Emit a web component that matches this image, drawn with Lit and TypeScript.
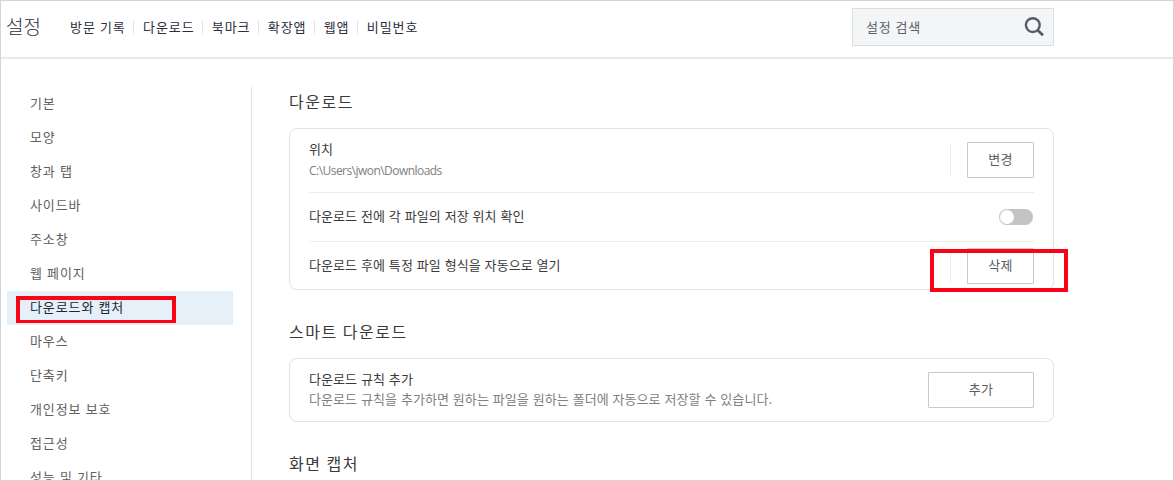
import { LitElement, html, css, nothing } from "lit";
import { customElement, property } from "lit/decorators.js";
import { classMap } from "lit/directives/class-map.js";

@customElement("settings-header")
export class SettingsHeader extends LitElement {
  static styles = css`
    :host {
      display: flex;
      align-items: flex-start;
      box-sizing: border-box;
      height: 57px;
      flex: none;
      padding: 7px 119px 0 5px;
      border-bottom: 1px solid #e3e4e5;
      box-shadow: 0 1px 1px #eeeeee;
      color: #2b2f3b;
    }

    .title {
      margin: 0;
      width: 57px;
      font-size: 19px;
      font-weight: 300;
      line-height: 36px;
    }

    .links {
      display: flex;
      align-items: center;
      height: 37px;
      font-size: 13px;
      letter-spacing: 0.92px;
      word-spacing: 0.4px;
    }

    .link {
      padding: 0 7.7px 0 8.6px;
      line-height: 14px;
      white-space: nowrap;
      border-left: 1px solid #e4e6e8;
    }

    .link:first-child {
      padding-left: 7px;
      border-left: none;
    }

    .search {
      display: flex;
      align-items: center;
      justify-content: space-between;
      box-sizing: border-box;
      width: 202px;
      height: 38px;
      margin-left: auto;
      padding: 0 8px 0 13px;
      border: 1px solid #dcdfe2;
      background: #f3f5f7;
      color: #5b5e69;
      font-size: 13px;
      letter-spacing: 0.85px;
    }

    .placeholder {
      padding-bottom: 2px;
    }
  `;

  links = ["방문 기록", "다운로드", "북마크", "확장앱", "웹앱", "비밀번호"];

  render() {
    return html`
      <h1 class="title">설정</h1>
      <nav class="links">
        ${this.links.map((link) => html`<span class="link">${link}</span>`)}
      </nav>
      <div class="search">
        <span class="placeholder">설정 검색</span>
        <svg width="22" height="22" viewBox="0 0 22 22" fill="none" stroke="#585c6b">
          <circle cx="9.8" cy="9.1" r="6.9" stroke-width="2.4" />
          <path d="M14.7 14.2L20 19.2" stroke-width="2.8" />
        </svg>
      </div>
    `;
  }
}

@customElement("settings-menu")
export class SettingsMenu extends LitElement {
  static styles = css`
    :host {
      display: block;
      box-sizing: border-box;
      width: 245px;
      flex: none;
      padding-right: 18px;
      border-right: 1px solid #e0e2e3;
    }

    .item {
      position: relative;
      height: 34px;
      padding-left: 23px;
      color: #606060;
      font-size: 13px;
      line-height: 31px;
      letter-spacing: 0.9px;
      word-spacing: 0.4px;
    }

    .item.active {
      background: #e5f0f9;
      color: #1e2733;
    }

    .mark {
      position: absolute;
      left: 9px;
      top: 5px;
      box-sizing: border-box;
      width: 160px;
      height: 27px;
      border: 4px solid #fb0316;
      border-bottom-width: 3px;
    }
  `;

  items = [
    "기본",
    "모양",
    "창과 탭",
    "사이드바",
    "주소창",
    "웹 페이지",
    "다운로드와 캡처",
    "마우스",
    "단축키",
    "개인정보 보호",
    "접근성",
    "성능 및 기타",
  ];

  @property() selected = "다운로드와 캡처";

  render() {
    return this.items.map((item) => {
      const active = item === this.selected;
      return html`
        <div class=${classMap({ item: true, active })}>
          ${item}${active ? html`<span class="mark"></span>` : nothing}
        </div>
      `;
    });
  }
}

@customElement("settings-content")
export class SettingsContent extends LitElement {
  static styles = css`
    :host {
      display: block;
      width: 765px;
      margin-left: 37px;
      color: #3a3a3a;
      font-size: 13px;
    }

    .heading {
      margin: 0;
      height: 41px;
      font-size: 16px;
      font-weight: inherit;
      line-height: 29px;
      letter-spacing: 1.5px;
    }

    .card {
      box-sizing: border-box;
      margin-bottom: 27px;
      padding: 0 19px;
      border: 1px solid #e1e3e4;
      border-radius: 8px;
    }

    .row {
      position: relative;
      display: flex;
      align-items: center;
      justify-content: space-between;
      box-sizing: border-box;
      height: 49px;
      border-top: 1px solid #ececec;
    }

    .row:last-child {
      height: 48px;
    }

    .row.tall {
      height: 63px;
      padding-bottom: 1px;
    }

    .row.tall:last-child {
      height: 62px;
      padding-bottom: 0;
    }

    .row:first-child {
      border-top: none;
    }

    .label {
      padding-bottom: 2px;
      line-height: 20px;
      letter-spacing: 0.06px;
      word-spacing: 0.9px;
      white-space: nowrap;
    }

    .desc {
      color: #808080;
    }

    .path {
      padding-top: 2px;
      margin-bottom: -2px;
      font-family: "Open Sans", "Noto Sans", sans-serif;
      font-size: 12px;
      letter-spacing: -0.54px;
    }

    .side {
      display: flex;
      align-items: center;
      gap: 16px;
    }

    .bar {
      width: 1px;
      height: 32px;
      background: #ececec;
    }

    .button {
      box-sizing: border-box;
      width: 67px;
      height: 36px;
      padding: 0 0 2px;
      border: 1px solid #c9cacc;
      border-radius: 1px;
      background: #ffffff;
      color: #5c5c5c;
      font: inherit;
      line-height: 32px;
      letter-spacing: 0.2px;
    }

    .button.wide {
      width: 106px;
    }

    .toggle {
      display: flex;
      box-sizing: border-box;
      width: 34px;
      height: 16px;
      margin-right: 1px;
      padding: 1px;
      border-radius: 8px;
      background: #c4c4c4;
    }

    .knob {
      width: 14px;
      height: 14px;
      border-radius: 50%;
      background: #ffffff;
    }

    .mark {
      position: absolute;
      right: -34px;
      top: 7px;
      box-sizing: border-box;
      width: 138px;
      height: 43px;
      border: 4px solid #fb0316;
    }
  `;

  render() {
    return html`
      <h2 class="heading">다운로드</h2>
      <div class="card">
        <div class="row tall">
          <div class="label">
            위치
            <div class="desc path">C:\\Users\\jwon\\Downloads</div>
          </div>
          <div class="side">
            <span class="bar"></span>
            <button class="button">변경</button>
          </div>
        </div>
        <div class="row">
          <div class="label">다운로드 전에 각 파일의 저장 위치 확인</div>
          <div class="toggle"><span class="knob"></span></div>
        </div>
        <div class="row">
          <div class="label">다운로드 후에 특정 파일 형식을 자동으로 열기</div>
          <div class="side">
            <span class="bar"></span>
            <button class="button">삭제</button>
          </div>
          <span class="mark"></span>
        </div>
      </div>

      <h2 class="heading">스마트 다운로드</h2>
      <div class="card">
        <div class="row tall">
          <div class="label">
            다운로드 규칙 추가
            <div class="desc">다운로드 규칙을 추가하면 원하는 파일을 원하는 폴더에 자동으로 저장할 수 있습니다.</div>
          </div>
          <button class="button wide">추가</button>
        </div>
      </div>

      <h2 class="heading">화면 캡처</h2>
    `;
  }
}

@customElement("app-root")
export class AppRoot extends LitElement {
  static styles = css`
    :host {
      display: flex;
      flex-direction: column;
      box-sizing: border-box;
      width: 1174px;
      height: 481px;
      overflow: hidden;
      border: 1px solid #d5d5d5;
      background: #ffffff;
      font-family: "Noto Sans CJK KR", "Noto Sans", sans-serif;
      font-weight: 400;
    }

    .body {
      display: flex;
      flex: 1;
      min-height: 0;
      padding: 29px 0 0 6px;
    }
  `;

  render() {
    return html`
      <settings-header></settings-header>
      <div class="body">
        <settings-menu></settings-menu>
        <settings-content></settings-content>
      </div>
    `;
  }
}
